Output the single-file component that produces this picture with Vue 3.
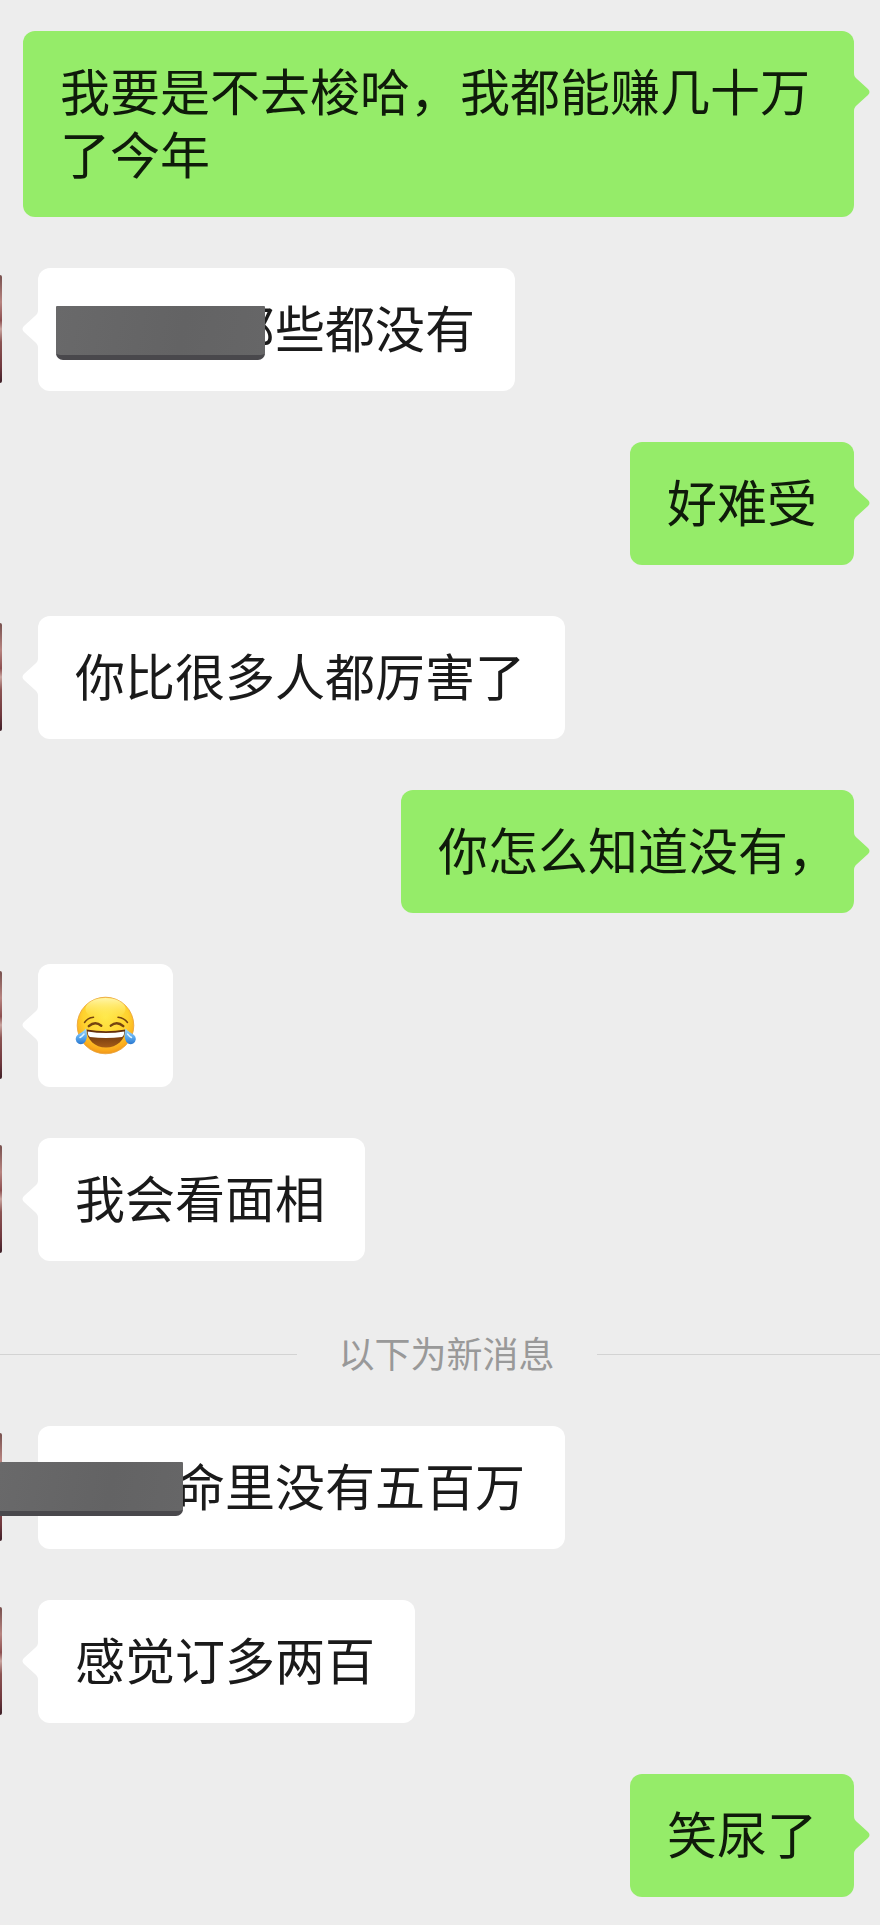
<script setup>
const earlier = [
  { id: 1, mine: true, text: '我要是不去梭哈，我都能赚几十万了今年' },
  { id: 2, mask: 'inner', text: '那些都没有' },
  { id: 3, mine: true, text: '好难受' },
  { id: 4, text: '你比很多人都厉害了' },
  { id: 5, mine: true, text: '你怎么知道没有，', tight: true },
  { id: 6, emoji: true },
  { id: 7, text: '我会看面相' }
]
const recent = [
  { id: 8, mask: 'edge', text: '命里没有五百万' },
  { id: 9, text: '感觉订多两百' },
  { id: 10, mine: true, text: '笑尿了' }
]
const groups = [
  { id: 'earlier', messages: earlier },
  { id: 'recent', messages: recent }
]
</script>

<template>
  <main class="chat">
    <template v-for="group in groups" :key="group.id">
      <div v-if="group.id === 'recent'" class="divider">
        <span class="rule"></span>
        <span class="label">以下为新消息</span>
        <span class="rule"></span>
      </div>
      <div v-for="m in group.messages" :key="m.id" class="row" :class="{ mine: m.mine }">
        <span v-if="!m.mine" class="avatar"></span>
        <div class="bubble" :class="{ sticker: m.emoji }">
          <svg class="tail" viewBox="0 0 16 38" aria-hidden="true">
            <path d="M0 0C0 3 1 4 3 6L14 16Q17 19 14 22L3 32C1 34 0 35 0 38Z" />
          </svg>
          <svg v-if="m.emoji" class="emoji" viewBox="2 0 61 63" role="img" aria-label="笑哭">
            <defs>
              <radialGradient id="face" cx="50%" cy="35%" r="66%">
                <stop offset="0" stop-color="#ffe94a" />
                <stop offset="0.6" stop-color="#ffd22e" />
                <stop offset="0.88" stop-color="#fbab1c" />
                <stop offset="1" stop-color="#ee931c" />
              </radialGradient>
              <linearGradient id="shine" x1="0" y1="0" x2="0" y2="1">
                <stop offset="0" stop-color="#fff9b8" stop-opacity="0.9" />
                <stop offset="1" stop-color="#ffec50" stop-opacity="0" />
              </linearGradient>
              <linearGradient id="mouth" x1="0" y1="0" x2="0" y2="1">
                <stop offset="0" stop-color="#5c2a0c" />
                <stop offset="1" stop-color="#a55c17" />
              </linearGradient>
              <linearGradient id="tear" x1="0" y1="0" x2="0" y2="1">
                <stop offset="0" stop-color="#a9dcfa" />
                <stop offset="0.55" stop-color="#5aaaf0" />
                <stop offset="1" stop-color="#2b78cf" />
              </linearGradient>
            </defs>
            <circle cx="32.5" cy="31.5" r="28.3" fill="url(#face)" stroke="#e9a032" stroke-width="0.8" />
            <ellipse cx="32.5" cy="15" rx="20" ry="11" fill="url(#shine)" />
            <g fill="none" stroke="#754410" stroke-linecap="round">
              <path d="M11.5 28.5Q14.5 24 20.5 23.3" stroke-width="1.5" />
              <path d="M45 23.3Q51 24 54.5 28.5" stroke-width="1.5" />
              <path d="M15.8 32.2Q22 26.5 28.3 31.7" stroke-width="2.4" />
              <path d="M37.8 31.7Q44 26.5 50.3 32.2" stroke-width="2.4" />
            </g>
            <path d="M13.5 35.5Q33 39 52.5 35.5C52 46 44 53.5 33 53.5S14 46 13.5 35.5Z" fill="url(#mouth)" />
            <path d="M14.6 37.5Q33 40.5 51.4 37.5Q51 42 49 43Q33 45 17 43Q15 42 14.6 37.5Z" fill="#fff" />
            <path d="M13 34.5C14 39 14.5 43 13 46A5.2 5.2 0 1 1 4.5 41C7 39 10.5 37.5 13 34.5Z" fill="url(#tear)" />
            <path d="M52.5 34.5C51.5 39 51 43 52.5 46A5.2 5.2 0 1 0 61 41C58.5 39 55 37.5 52.5 34.5Z" fill="url(#tear)" />
            <path d="M11 40Q9 42.5 7 43.5M54.5 40Q56.5 42.5 58.5 43.5" fill="none" stroke="#e2f5ff" stroke-width="1.5" stroke-linecap="round" />
          </svg>
          <p v-else class="text" :class="[m.mask, { tight: m.tight }]">{{ m.text }}</p>
          <span v-if="m.mask" class="mask" :class="m.mask"></span>
        </div>
      </div>
    </template>
  </main>
</template>

<style>
html,
body {
  background: #ededed;
}
</style>

<style scoped>
.chat {
  box-sizing: border-box;
  min-height: 100vh;
  padding: 31px 0 28px;
  display: flex;
  flex-direction: column;
  gap: 51px;
  overflow: hidden;
  background: #ededed;
  font-family: "Noto Sans CJK SC", sans-serif;
}

.row {
  position: relative;
  display: flex;
  padding: 0 23px 0 38px;
}

.row.mine {
  justify-content: flex-end;
  padding: 0 26px 0 23px;
}

.avatar {
  position: absolute;
  left: 0;
  top: 7px;
  width: 2px;
  height: 108px;
  border-radius: 0 2px 2px 0;
  background: linear-gradient(#77504e, #b78480 25%, #8c4f50 42%, #c9a5a0 50%, #8b5453 62%, #70383e 85%, #3e2028);
}

.bubble {
  position: relative;
  padding: 27px 40px 33px 37px;
  border-radius: 12px;
  background: #fff;
  color: #1a1a1a;
}

.bubble.sticker {
  padding: 30px 37px;
}

.mine .bubble {
  padding-right: 37px;
  background: #95ec69;
  color: #0f1b0a;
}

.tail {
  position: absolute;
  top: 42px;
  right: 100%;
  width: 16px;
  height: 38px;
  fill: #fff;
  transform: scaleX(-1);
}

.mine .tail {
  right: auto;
  left: 100%;
  fill: #95ec69;
  transform: none;
}

.text {
  margin: 0;
  font-size: 50px;
  line-height: 63px;
  text-spacing-trim: space-all;
}

.text.tight {
  padding-right: 4px;
  font-feature-settings: "halt";
}

.text.inner {
  padding-left: 3em;
}

.text.edge {
  padding-left: 2em;
}

.emoji {
  display: block;
  width: 61px;
  height: 63px;
}

.mask {
  position: absolute;
  height: 54px;
  box-sizing: border-box;
  border-bottom: 5px solid #49484c;
  border-radius: 1px 1px 7px 7px;
  background: linear-gradient(100deg, #69696a, #636364 60%, #666667);
}

.mask.inner {
  top: 38px;
  left: 18px;
  width: 209px;
}

.mask.edge {
  top: 36px;
  left: -38px;
  width: 183px;
  border-bottom-left-radius: 0;
}

.divider {
  display: grid;
  grid-template-columns: 296fr auto 283fr;
  align-items: center;
  gap: 42px;
  margin-top: 21px;
}

.rule {
  height: 1px;
  background: #d3d3d3;
}

.label {
  padding-bottom: 4px;
  color: #999;
  font-size: 36px;
  line-height: 38px;
}
</style>
